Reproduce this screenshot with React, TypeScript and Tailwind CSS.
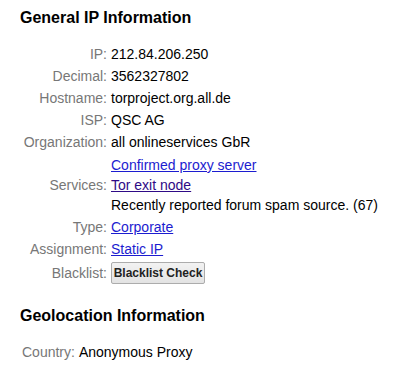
export default function App() {
  const rows: { label: string; lines: { text: string; href?: boolean; visited?: boolean }[] }[] = [
    { label: 'IP', lines: [{ text: '212.84.206.250' }] },
    { label: 'Decimal', lines: [{ text: '3562327802' }] },
    { label: 'Hostname', lines: [{ text: 'torproject.org.all.de' }] },
    { label: 'ISP', lines: [{ text: 'QSC AG' }] },
    { label: 'Organization', lines: [{ text: 'all onlineservices GbR' }] },
  ];

  return (
    <div className="min-h-screen w-[409px] bg-white font-['Liberation_Sans',Arial,sans-serif] text-[14px] text-black">
      <h2 className="pl-5 pt-[8px] text-[16px] font-bold leading-[19px]">General IP Information</h2>

      <table className="mt-[16px] border-collapse">
        <tbody>
          {rows.map((r) => (
            <tr key={r.label}>
              <td className="w-[110px] py-[1px] pr-[3px] text-right align-top leading-[20px] text-[#777]">{r.label}:</td>
              <td className="py-[1px] pl-[1px] align-top leading-[20px]">{r.lines[0].text}</td>
            </tr>
          ))}
          <tr>
            <td className="w-[110px] py-[1px] pr-[3px] text-right align-middle leading-[20px] text-[#777]">Services:</td>
            <td className="py-[1px] pl-[1px] align-top leading-[20px]">
              <div className="mt-[1px]"><a href="#" className="text-[#1c1cd0] underline">Confirmed proxy server</a></div>
              <div><a href="#" className="text-[#2e0a86] underline">Tor exit node</a></div>
              <div>Recently reported forum spam source. (67)</div>
            </td>
          </tr>
          <tr>
            <td className="w-[110px] py-[1px] pr-[3px] text-right align-top leading-[20px] text-[#777]">Type:</td>
            <td className="py-[1px] pl-[1px] align-top leading-[20px]">
              <a href="#" className="text-[#1c1cd0] underline">Corporate</a>
            </td>
          </tr>
          <tr>
            <td className="w-[110px] py-[1px] pr-[3px] text-right align-top leading-[20px] text-[#777]">Assignment:</td>
            <td className="py-[1px] pl-[1px] align-top leading-[20px]">
              <a href="#" className="text-[#1c1cd0] underline">Static IP</a>
            </td>
          </tr>
          <tr>
            <td className="w-[110px] py-[1px] pr-[3px] text-right align-middle leading-[20px] text-[#777]">Blacklist:</td>
            <td className="py-[2px] pl-[1px] align-middle">
              <button className="h-[22px] w-[94px] rounded-[2px] border border-[#acacac] bg-gradient-to-b from-[#f2f2f2] to-[#e3e3e3] text-[12px] font-bold leading-[20px] text-[#222]">
                Blacklist Check
              </button>
            </td>
          </tr>
        </tbody>
      </table>

      <h2 className="mt-[20px] pl-5 text-[16px] font-bold leading-[19px]">Geolocation Information</h2>

      <div className="mt-[17px] flex pl-[22px] leading-[20px]">
        <span className="text-[#777]">Country:</span>
        <span className="ml-[4px]">Anonymous Proxy</span>
      </div>
    </div>
  );
}
